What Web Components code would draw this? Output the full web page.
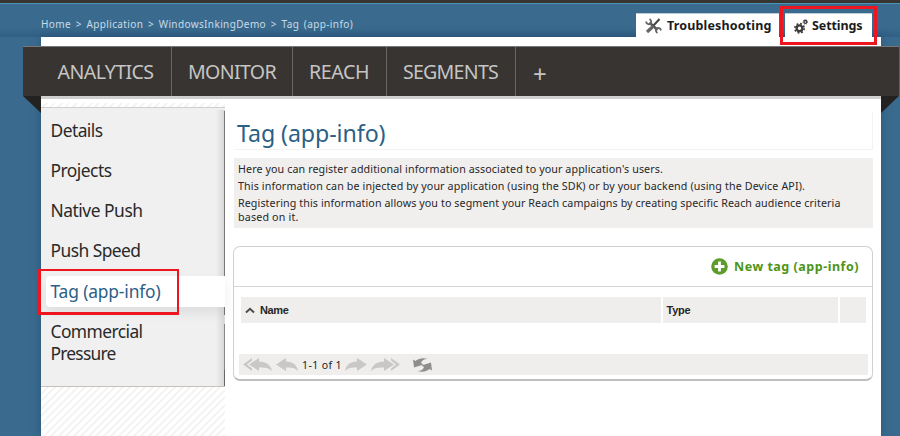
<!DOCTYPE html>
<html lang="en">
<head>
<meta charset="utf-8">
<title>Tag (app-info)</title>
<style>
html,body{margin:0;width:900px;height:436px;overflow:hidden;background:#3a6b8f;font-family:"Noto Sans","Open Sans",sans-serif}
</style>
</head>
<body>
<app-shell></app-shell>
<script>
const define = (name, html, init) => customElements.define(name, class extends HTMLElement {
  constructor() {
    super();
    this.attachShadow({ mode: 'open' }).innerHTML = html;
  }
  connectedCallback() { if (init) init(this, this.shadowRoot); }
});

/* Tracks its text so that it fills the given measure */
define('fit-text', `<style>:host{display:inline-block;white-space:pre;width:max-content}</style><slot></slot>`, el => {
  const fit = () => {
    el.style.letterSpacing = '0px';
    const n = el.textContent.length;
    const w = el.getBoundingClientRect().width;
    el.style.letterSpacing = ((+el.getAttribute('measure') - w) / n).toFixed(3) + 'px';
  };
  fit();
  requestAnimationFrame(fit);
});

define('crumb-trail', `<style>:host{display:block;font-size:10px;line-height:14px;color:#c9dbe8;word-spacing:1.7px}</style>
<fit-text measure="312">Home &gt; Application &gt; WindowsInkingDemo &gt; Tag (app-info)</fit-text>`);

define('page-tab', `<style>:host{display:flex;box-sizing:border-box;height:24px;background:#fff;font-weight:700;font-size:12.5px;line-height:24px;color:#1c1c1c;align-items:flex-start;border-top:1px solid #b9cddb}</style>
<slot name="icon"></slot><slot></slot>`);

define('nav-item', `<style>:host{display:flex;box-sizing:border-box;height:49px;font-size:19.6px;line-height:50px;color:#c6c5c4;border-right:1px solid #696765}:host([last]){border:0}</style><slot></slot>`);

define('nav-ribbon', `<style>
:host{display:block;position:relative;margin:0 -18px;height:49px;background:#373432;border-top:1px solid #777}
nav{display:flex}
nav-item{padding-left:17px}
.fold{position:absolute;top:49px;width:18px;height:17px;background:#242220}
.l{left:0;clip-path:polygon(0 0,100% 0,100% 100%)}
.r{right:0;clip-path:polygon(0 0,100% 0,0 100%)}
</style>
<nav>
<nav-item style="width:149px;padding-left:34.500px"><fit-text measure="96">ANALYTICS</fit-text></nav-item>
<nav-item style="width:121px;padding-left:16px"><fit-text measure="88">MONITOR</fit-text></nav-item>
<nav-item style="width:94px;padding-left:16px"><fit-text measure="60">REACH</fit-text></nav-item>
<nav-item style="width:129px;padding-left:16px"><fit-text measure="95">SEGMENTS</fit-text></nav-item>
<nav-item last style="font-size:24px;line-height:53px">+</nav-item>
</nav><i class="fold l"></i><i class="fold r"></i>`);

define('side-item', `<style>
:host{display:block;box-sizing:border-box;min-height:31px;margin-bottom:9.250px;padding:4px 0 0 4.500px;margin-left:5px;font-size:17.4px;line-height:22.4px;color:#292929}
:host([active]){background:#fff;color:#2b6086;border-radius:4px 0 0 4px;box-shadow:0 6px 12px #00000014}
</style><slot></slot>`);

define('side-menu', `<style>
:host{display:flex;flex-direction:column;width:184px;height:333px;background:repeating-linear-gradient(135deg,#fff 0 3.2px,#f4f4f4 3.2px 5.3px)}
nav{position:relative;box-sizing:border-box;margin-top:4px;height:280px;padding-top:6.500px;border-top:1px solid #cfcfcf;border-bottom:1px solid #c9c0ba;background:#f0f0f0}
nav::after{content:"";position:absolute;right:0;top:2px;bottom:0;width:9px;background:linear-gradient(90deg,#0000,#00000018 80%,#00000022);}
nav::before{content:"";position:absolute;right:0;top:3px;bottom:0;width:1px;background:linear-gradient(#777 0 204px,#ddd 204px 213px,#888 213px 259px,#666 259px);z-index:1}
side-item[active]{position:relative;z-index:2}
</style>
<nav>
<side-item><fit-text measure="52">Details</fit-text></side-item>
<side-item><fit-text measure="61">Projects</fit-text></side-item>
<side-item><fit-text measure="92">Native Push</fit-text></side-item>
<side-item><fit-text measure="90">Push Speed</fit-text></side-item>
<side-item active><fit-text measure="110">Tag (app-info)</fit-text></side-item>
<side-item><fit-text measure="92">Commercial</fit-text><br><fit-text measure="65">Pressure</fit-text></side-item>
</nav>`);

define('info-note', `<style>
:host{display:block;box-sizing:border-box;height:70px;margin-top:8px;padding:4px 0 0 4px;background:#f0efee;font-size:10.7px;line-height:14px;color:#272727}
p{margin:0 0 3px;height:14px}p:nth-of-type(3){margin-bottom:0}
</style>
<p><fit-text measure="425">Here you can register additional information associated to your application's users.</fit-text></p>
<p><fit-text measure="567">This information can be injected by your application (using the SDK) or by your backend (using the Device API).</fit-text></p>
<p><fit-text measure="602.5">Registering this information allows you to segment your Reach campaigns by creating specific Reach audience criteria</fit-text></p>
<p><fit-text measure="60.5">based on it.</fit-text></p>`);

define('table-pager', `<style>
:host{display:flex;align-items:center;box-sizing:border-box;height:21px;margin:0 4px 0 5px;padding-left:4px;background:#efeeec;font-size:10.5px;line-height:20px;color:#222}
svg{display:block;fill:#c9c8c6}
</style>
<svg width="29" height="14" viewBox="0 0 29 14"><path d="M0 6.500 9 0v2.500L4 6.500l5 4V13zM6 6.500 16 0v3.500c7 .3 12 3.500 13 9.500-3-3-7-4-13-3.500V13z"/></svg>
<svg width="22" height="14" viewBox="0 0 22 14" style="margin-left:4px"><path d="M0 6.500 10 0v3.500c7 .3 11 3.500 12 9.500-3-3-6-4-12-3.500V13z"/></svg>
<fit-text measure="40" style="margin:0 3px 0 4px">1-1 of 1</fit-text>
<svg width="22" height="14" viewBox="0 0 22 14"><path d="M22 6.500 12 0v3.500C5 3.800 1 7 0 13c3-3 6-4 12-3.500V13z"/></svg>
<svg width="29" height="14" viewBox="0 0 29 14" style="margin-left:4px"><path d="M29 6.500 20 0v2.500l5 4-5 4V13zM23 6.500 13 0v3.500C6 3.800 1 7 0 13c3-3 7-4 13-3.500V13z"/></svg>
<svg width="19" height="14" viewBox="0 0 19 14" style="margin-left:13px;fill:#8f8e8c"><path d="M0 1.500 2.500 3C6 0 10-.4 15 1c-4 .2-6 1-7 4L10.500 6.500 1 9.500zM19 12.500 16.500 11c-3.500 3-7.500 3.400-12.500 2 4-.2 6-1 7-4L8.500 7.500 18 4.500z"/></svg>`);

define('tag-table', `<style>
:host{display:block;box-sizing:border-box;height:135px;margin:18px 0 0 -1px;border:1px solid #d0d0d0;border-bottom:2px solid #bebebe;border-radius:7px;background:#fff}
header{display:flex;align-items:center;justify-content:flex-end;box-sizing:border-box;height:40px;padding-right:13px;border-bottom:1px solid #d6d6d6;gap:6.500px;font-size:12.5px;font-weight:700;color:#4d9417}
.head{display:grid;grid-template-columns:420px 175px 26px;gap:2px;margin:10px 0 31px 7px;height:26px;font:bold 11px/26px "Liberation Sans",sans-serif;color:#262626}
.head div{display:flex;align-items:center;background:#efeeec;padding-left:3.500px}
svg{display:block}
</style>
<header><svg width="17" height="17" viewBox="0 0 17 17"><circle cx="8.500" cy="8.500" r="8.300" fill="#5b9c2b"/><path d="M8.500 3.600v9.800M3.600 8.500h9.800" stroke="#fff" stroke-width="2.800"/></svg><fit-text measure="125">New tag (app-info)</fit-text></header>
<div class="head"><div><svg width="10" height="7" viewBox="0 0 10 7" style="margin-right:5.500px"><path d="M1 5.500 5 1.800 9 5.500" fill="none" stroke="#4a4a4a" stroke-width="1.900"/></svg><fit-text measure="28.5">Name</fit-text></div><div><fit-text measure="24">Type</fit-text></div><div></div></div>
<table-pager></table-pager>`);

define('page-title', `<style>
:host{display:block;box-sizing:border-box;height:38px;padding-left:3px;border-right:1px solid #f3f3f3;border-bottom:1px solid #f3f3f3;font-size:23.2px;line-height:43px;color:#2b6086}
</style><slot></slot>`);

define('red-marker', `<style>:host{position:absolute;box-sizing:border-box;border:3px solid #ed1620;z-index:5}</style>`);

define('app-shell', `<style>
:host{display:flex;flex-direction:column;position:relative;width:900px;height:436px;box-sizing:border-box;overflow:hidden;background:#3a6b8f;border-top:3px solid #373432}
.top{display:flex;justify-content:space-between;align-items:flex-end;box-sizing:border-box;height:34px;flex:none;border-top:1px solid #4a93b3;padding:0 28px 0 41px;background:linear-gradient(#3a6b8f 70%,#315f85)}
.tabs{display:flex;gap:6px}
page-tab{position:relative;z-index:1}
crumb-trail{margin-bottom:6px}
.page{box-sizing:border-box;width:840px;height:400px;margin:0 0 0 41px;padding-top:9px;background:#fff;box-shadow:0 0 8px #173d5b80}
.cols{display:grid;grid-template-columns:184px 639px;gap:9px;border-top:3px solid #cfcfcf;padding-top:4px}
main{padding-top:9px}
svg{display:block}
</style>
<div class="top"><crumb-trail></crumb-trail><div class="tabs">
<page-tab style="width:143px;padding-left:9px"><svg slot="icon" width="17" height="16" viewBox="0 0 17 16" style="margin:4px 5px 0 0" fill="none"><path d="M4.500 4.500 12.500 12" stroke="#555" stroke-width="2.400"/><path d="M1 3.500C1.500 6 4 7 5.500 5.500S6 2 4.500 1M16 12.500C15.500 10 13 9.500 11.500 10.500s-.5 3.500 1 4.500" stroke="#666" stroke-width="1.800"/><path d="m2 14 6.500-6" stroke="#666" stroke-width="3.200"/><path d="m8.500 7.500 6-6.500" stroke="#444" stroke-width="2"/></svg><fit-text measure="104.5">Troubleshooting</fit-text></page-tab>
<page-tab style="width:87px;padding-left:9px"><svg slot="icon" width="14" height="15" viewBox="0 0 14 15" style="margin:5px 4px 0 0" fill="none" stroke="#3d3d3d"><circle cx="5.500" cy="9.300" r="2.900" stroke-width="2.400"/><circle cx="5.500" cy="9.300" r="4.700" stroke-width="1.600" stroke-dasharray="1.850 1.850"/><circle cx="11.300" cy="2.900" r="1.400" stroke-width="1.300"/><circle cx="11.300" cy="2.900" r="2.300" stroke-width=".9" stroke-dasharray=".9 .9"/></svg><fit-text measure="50.5">Settings</fit-text></page-tab>
</div></div>
<div class="page"><nav-ribbon></nav-ribbon>
<div class="cols"><side-menu></side-menu><main><page-title><fit-text measure="148.5">Tag (app-info)</fit-text></page-title><info-note></info-note><tag-table></tag-table></main></div></div>
<red-marker style="left:780px;top:3px;width:97px;height:39px"></red-marker>
<red-marker style="left:38px;top:266px;width:141px;height:46px;border-width:2px 2px 3px 3px"></red-marker>`);
</script>
</body>
</html>
